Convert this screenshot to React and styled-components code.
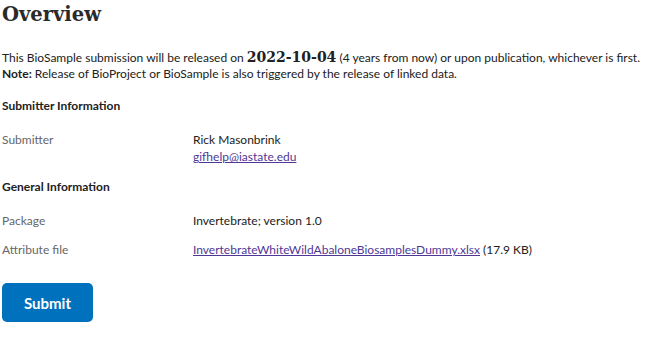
import styled, { createGlobalStyle } from "styled-components";

const GlobalStyle = createGlobalStyle`
  html, body {
    margin: 0;
    padding: 0;
    background: #fff;
  }
  body {
    font-family: Lato, "Liberation Sans", sans-serif;
    color: #212121;
  }
`;

const Page = styled.div`
  padding: 0 2px;
  width: 646px;
`;

const Title = styled.h1`
  font-family: "DejaVu Serif", "Liberation Serif", serif;
  font-size: 19.5px;
  font-weight: bold;
  color: #2a2a2a;
  margin: 2px 0 21px;
  line-height: 26px;
`;

const Notice = styled.p`
  font-size: 12px;
  line-height: 16px;
  margin: 0 0 16px;
`;

const Date = styled.strong`
  font-family: "DejaVu Serif", "Liberation Serif", serif;
  font-size: 14px;
`;

const Section = styled.h3`
  font-size: 12px;
  font-weight: bold;
  margin: 10px 0 17px;
  line-height: 16px;
`;

const Row = styled.div`
  display: grid;
  grid-template-columns: 191px 1fr;
  font-size: 12px;
  line-height: 17px;
  margin-bottom: ${(p) => p.$gap ?? 14}px;
`;

const Label = styled.div`
  color: #666;
`;

const Value = styled.div`
  display: flex;
  flex-direction: column;
`;

const Link = styled.a`
  color: #4f3796;
  text-decoration: underline;
`;

const SubmitButton = styled.button`
  margin-top: 7px;
  width: 91px;
  height: 39px;
  border: none;
  border-radius: 5px;
  background: #0071bc;
  color: #fff;
  font-family: Lato, "Liberation Sans", sans-serif;
  font-size: 15px;
  font-weight: bold;
`;

export default function App() {
  return (
    <Page>
      <GlobalStyle />
      <Title>Overview</Title>
      <Notice>
        This BioSample submission will be released on <Date>2022-10-04</Date>{" "}
        (4 years from now) or upon publication, whichever is first.
        <br />
        <strong>Note:</strong> Release of BioProject or BioSample is also
        triggered by the release of linked data.
      </Notice>
      <Section>Submitter Information</Section>
      <Row>
        <Label>Submitter</Label>
        <Value>
          <span>Rick Masonbrink</span>
          <span>
            <Link href="#">gifhelp@iastate.edu</Link>
          </span>
        </Value>
      </Row>
      <Section>General Information</Section>
      <Row $gap={12}>
        <Label>Package</Label>
        <Value>Invertebrate; version 1.0</Value>
      </Row>
      <Row $gap={18}>
        <Label>Attribute file</Label>
        <Value>
          <span>
            <Link href="#">InvertebrateWhiteWildAbaloneBiosamplesDummy.xlsx</Link>{" "}
            (17.9 KB)
          </span>
        </Value>
      </Row>
      <SubmitButton>Submit</SubmitButton>
    </Page>
  );
}
